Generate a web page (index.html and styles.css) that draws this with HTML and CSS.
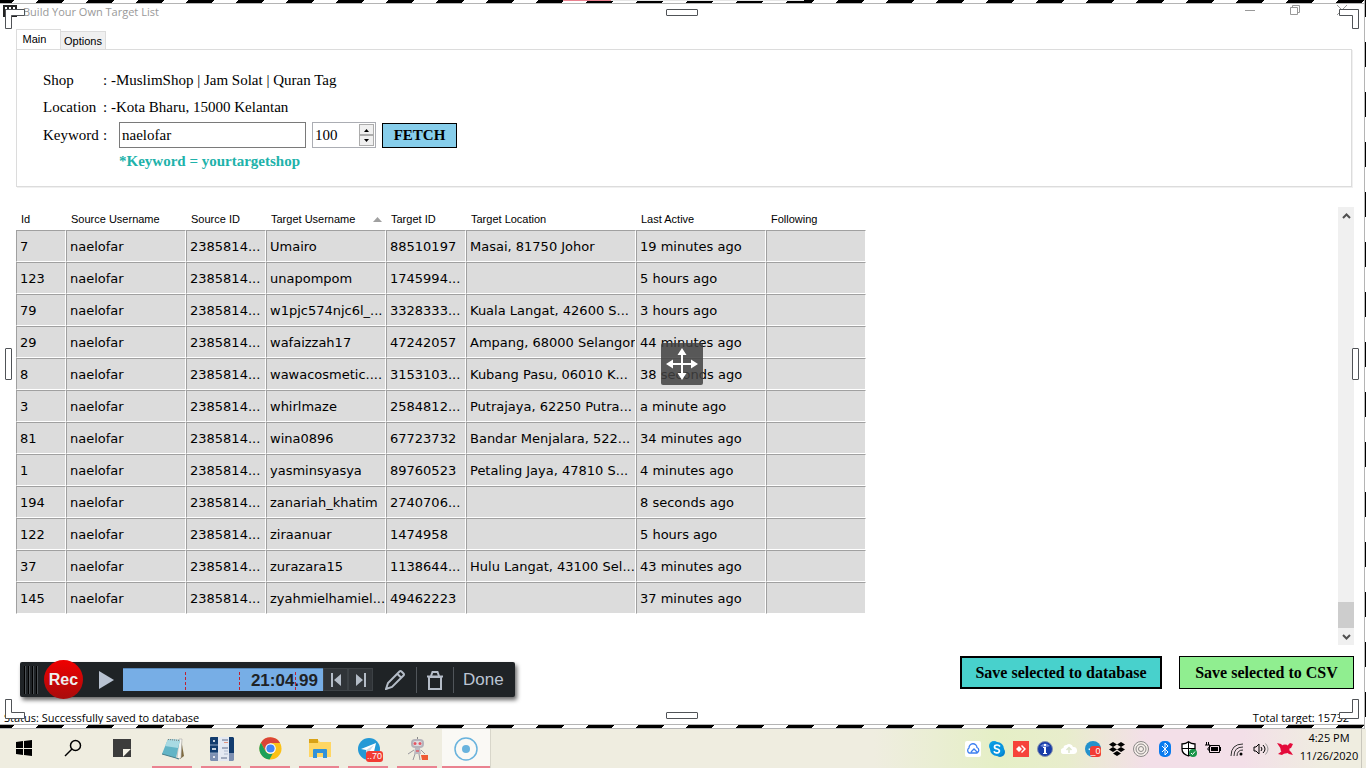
FILE: index.html
```html
<!DOCTYPE html>
<html lang="en">
  <head>
    <meta charset="UTF-8" />
    <meta name="viewport" content="width=device-width, initial-scale=1.0" />
    <title>Build Your Own Target List</title>
    <link rel="stylesheet" href="styles.css">
  </head>

  <body>
    <div class="capture">
      <div class="stripes top"><span class="strip-pink"></span><span class="strip-gray"></span></div>

      <main class="window">
        <header class="titlebar">
          <svg class="app-icon" width="16" height="14" viewBox="0 0 16 14"><path d="M1 1h14v12H1z" fill="#222"/><path d="M3 3h2v2H3zM7 3h2v2H7zM11 3h2v2h-2zM3 7h2v1H3zM7 7h2v1H7zM3 10h2v1H3zM7 10h2v1H7zM11 10h2v1h-2z" fill="#fff"/></svg>
          <h1>Build Your Own Target List</h1>
          <div class="win-buttons">
            <button aria-label="Minimize"><svg width="12" height="12" viewBox="0 0 12 12"><path d="M1 6.500h10"/></svg></button>
            <button aria-label="Restore"><svg width="12" height="12" viewBox="0 0 12 12"><path d="M.5 3.500h7v7h-7zM2.500 3.500v-2h7v7h-2"/></svg></button>
            <button aria-label="Close"><svg width="12" height="12" viewBox="0 0 12 12"><path d="M1 1l10 10M11 1L1 11"/></svg></button>
          </div>
        </header>

        <nav class="tabs">
          <button class="tab active">Main</button>
          <button class="tab">Options</button>
        </nav>

        <section class="panel">
          <p class="info"><span class="name">Shop</span>: -MuslimShop | Jam Solat | Quran Tag</p>
          <p class="info"><span class="name">Location</span>: -Kota Bharu, 15000 Kelantan</p>
          <div class="search">
            <label class="key" for="keyword"><span class="name">Keyword</span>:</label>
            <input type="text" id="keyword" class="keyword" value="naelofar">
            <div class="stepper">
              <input type="text" class="amount" id="amount" value="100" aria-label="Amount">
              <div class="spin">
                <button aria-label="Increase"><svg width="7" height="4" viewBox="0 0 7 4"><path d="M1 4L3.500 1L6 4z"/></svg></button>
                <button aria-label="Decrease"><svg width="7" height="4" viewBox="0 0 7 4"><path d="M1 0L3.500 3L6 0z"/></svg></button>
              </div>
            </div>
            <button class="fetch">FETCH</button>
          </div>
          <p class="hint">*Keyword = yourtargetshop</p>
        </section>

        <section class="list">
          <div class="table-wrap">
            <table>
              <colgroup>
                <col class="w50"><col class="w120"><col class="w80"><col class="w120"><col class="w80"><col class="w170"><col class="w130"><col class="w100">
              </colgroup>
              <thead>
                <tr>
                  <th>Id</th>
                  <th>Source Username</th>
                  <th>Source ID</th>
                  <th class="sorted">Target Username <svg width="9" height="5" viewBox="0 0 9 5"><path d="M0 5L4.500 0L9 5z" fill="#a0a0a0"/></svg></th>
                  <th>Target ID</th>
                  <th>Target Location</th>
                  <th>Last Active</th>
                  <th>Following</th>
                </tr>
              </thead>
              <tbody>
                <tr><td>7</td><td>naelofar</td><td>2385814...</td><td>Umairo</td><td>88510197</td><td>Masai, 81750 Johor</td><td>19 minutes ago</td><td></td></tr>
                <tr><td>123</td><td>naelofar</td><td>2385814...</td><td>unapompom</td><td>1745994...</td><td></td><td>5 hours ago</td><td></td></tr>
                <tr><td>79</td><td>naelofar</td><td>2385814...</td><td>w1pjc574njc6l_...</td><td>3328333...</td><td>Kuala Langat, 42600 S...</td><td>3 hours ago</td><td></td></tr>
                <tr><td>29</td><td>naelofar</td><td>2385814...</td><td>wafaizzah17</td><td>47242057</td><td>Ampang, 68000 Selangor</td><td>44 minutes ago</td><td></td></tr>
                <tr><td>8</td><td>naelofar</td><td>2385814...</td><td>wawacosmetic....</td><td>3153103...</td><td>Kubang Pasu, 06010 K...</td><td>38 seconds ago</td><td></td></tr>
                <tr><td>3</td><td>naelofar</td><td>2385814...</td><td>whirlmaze</td><td>2584812...</td><td>Putrajaya, 62250 Putra...</td><td>a minute ago</td><td></td></tr>
                <tr><td>81</td><td>naelofar</td><td>2385814...</td><td>wina0896</td><td>67723732</td><td>Bandar Menjalara, 522...</td><td>34 minutes ago</td><td></td></tr>
                <tr><td>1</td><td>naelofar</td><td>2385814...</td><td>yasminsyasya</td><td>89760523</td><td>Petaling Jaya, 47810 S...</td><td>4 minutes ago</td><td></td></tr>
                <tr><td>194</td><td>naelofar</td><td>2385814...</td><td>zanariah_khatim</td><td>2740706...</td><td></td><td>8 seconds ago</td><td></td></tr>
                <tr><td>122</td><td>naelofar</td><td>2385814...</td><td>ziraanuar</td><td>1474958</td><td></td><td>5 hours ago</td><td></td></tr>
                <tr><td>37</td><td>naelofar</td><td>2385814...</td><td>zurazara15</td><td>1138644...</td><td>Hulu Langat, 43100 Sel...</td><td>43 minutes ago</td><td></td></tr>
                <tr><td>145</td><td>naelofar</td><td>2385814...</td><td>zyahmielhamiel...</td><td>49462223</td><td></td><td>37 minutes ago</td><td></td></tr>
              </tbody>
            </table>
          </div>
          <div class="scrollbar">
            <button aria-label="Scroll up"><svg width="9" height="6" viewBox="0 0 9 6"><path d="M1 5l3.500-3.500L8 5"/></svg></button>
            <div class="thumb"></div>
            <button aria-label="Scroll down"><svg width="9" height="6" viewBox="0 0 9 6"><path d="M1 1l3.500 3.500L8 1"/></svg></button>
          </div>
        </section>

        <div class="actions">
          <button class="save-db">Save selected to database</button>
          <button class="save-csv">Save selected to CSV</button>
        </div>

        <footer class="status">
          <span>Status: Successfully saved to database</span>
          <span>Total target: 15732</span>
        </footer>
      </main>

      <div class="stripes bottom"></div>
      <div class="stripes-right"></div>

      <!-- capture frame -->
      <svg class="corner tl" viewBox="0 0 20 20"><path d="M.5.5h19v6h-13v13h-6z"/></svg>
      <svg class="corner tr" viewBox="0 0 20 20"><path d="M.5.5h19v19h-6v-13h-13z"/></svg>
      <svg class="corner bl" viewBox="0 0 20 20"><path d="M.5.5h6v13h13v6h-19z"/></svg>
      <svg class="corner br" viewBox="0 0 20 20"><path d="M13.500.5h6v19h-19v-6h13z"/></svg>
      <span class="handle wide t"></span>
      <span class="handle wide b"></span>
      <span class="handle tall l"></span>
      <span class="handle tall r"></span>
      <div class="move">
        <svg width="32" height="32" viewBox="0 0 32 32"><path d="M15 5h2v10h10v2H17v10h-2V17H5v-2h10z"/><path d="M16 0l4.500 7h-9zM16 32l4.500-7h-9zM0 16l7-4.500v9zM32 16l-7-4.500v9z"/></svg>
      </div>

      <div class="recorder">
        <span class="grip"></span>
        <button class="rec">Rec</button>
        <button class="play" aria-label="Play"><svg width="15" height="18" viewBox="0 0 15 18"><path d="M0 0l15 9L0 18z" fill="#b9c3d2"/></svg></button>
        <div class="timeline"><i></i><i></i><i></i><span>21:04.99</span></div>
        <button class="step" aria-label="Previous"><svg width="12" height="14" viewBox="0 0 12 14"><path d="M1 0h2v14H1zM11 1v12L4 7z"/></svg></button>
        <button class="step" aria-label="Next"><svg width="12" height="14" viewBox="0 0 12 14"><path d="M9 0h2v14H9zM1 1v12l7-6z"/></svg></button>
        <button class="tool pencil" aria-label="Edit"><svg width="20" height="20" viewBox="0 0 20 20"><path d="M1 19l2-6L14.500 1.500q1-1 2 0l2 2q1 1 0 2L7 17zM12.500 4l3.500 3.500"/></svg></button>
        <button class="tool trash" aria-label="Delete"><svg width="18" height="20" viewBox="0 0 18 20"><path d="M3 7h12v12H3zM1 6.500h16M5 6l1.500-4h5L13 6"/></svg></button>
        <button class="done">Done</button>
      </div>
    </div>

    <footer class="taskbar">
      <div class="apps">
        <button aria-label="Start"><svg width="16" height="16" viewBox="0 0 16 16"><path d="M0 2l7-1v7H0zM8 1l8-1v8H8zM0 9h7v6l-7-1zM8 9h8v7l-8-1z"/></svg></button>
        <button aria-label="Search"><svg width="18" height="18" viewBox="0 0 18 18"><g fill="none" stroke="#000" stroke-width="1.500"><circle cx="11.500" cy="6.500" r="5"/><path d="M8 10l-7 7"/></g></svg></button>
        <button aria-label="Sticky note"><svg width="18" height="18" viewBox="0 0 18 18"><path d="M0 0h18v10l-8 8H0z" fill="#3c3c3c"/><path d="M10 10h8l-8 8z" fill="#f5f3e8"/><path d="M18 10v8h-8z" fill="#3c3c3c"/></svg></button>
        <button class="open" aria-label="Notepad"><svg width="26" height="24" viewBox="0 0 26 24"><path d="M21 2l3 17-4 3z" fill="#806c42"/><path d="M19 2h3l-1 19-4 1z" fill="#f4f4f0" stroke="#999" stroke-width=".5"/><path d="M8 2l12 1-4 18-14-4z" fill="#62b4c6"/><path d="M8 2l12 1-2 8-13-2z" fill="#a8dae3"/><path d="M2 17l14 4 3 1" stroke="#477e8b" fill="none"/><path d="M8 2.500l12 1" stroke="#777" stroke-dasharray="1 1"/></svg></button>
        <button class="open" aria-label="Database"><svg width="24" height="24" viewBox="0 0 24 24"><path d="M0 1q0-1 1-1h7v16H0zM19 0h4l1 1v15h-5z" fill="#123c6e"/><path d="M0 16h8v8H1l-1-1zM19 16h5v7l-1 1h-4z" fill="#7d90b2"/><path d="M8 0h11v24H8z" fill="#e4e9f2"/><path d="M0 8h8M0 16h8" stroke="#8ba2c0"/><path d="M2 12h4M3 4h2M3 20h2" stroke="#fff" stroke-width="1.500"/><path d="M12 3h6M12 11h6M11 21h6" stroke="#5d6b88"/><path d="M14 5.500h4" stroke="#e29580"/><path d="M14 14h4M14 17h4" stroke="#abb7cd"/></svg></button>
        <button class="open" aria-label="Chrome"><svg width="23" height="23" viewBox="0 0 24 24"><circle cx="12" cy="12" r="11.500" fill="#fbc116"/><path d="M2 6A11.500 11.500 0 0 1 22 6.300H12L7.200 15z" fill="#db4437"/><path d="M2 6l5 9a5.500 5.500 0 0 0 7.500 2L11 23.500A11.500 11.500 0 0 1 2 6z" fill="#1da05b"/><circle cx="12" cy="12" r="5.500" fill="#fff"/><circle cx="12" cy="12" r="4.300" fill="#4285f4"/></svg></button>
        <button class="open" aria-label="Files"><svg width="22" height="20" viewBox="0 0 22 20"><path d="M0 1h9l2 2h11v15H0z" fill="#ffd663"/><path d="M0 0h9v4H0z" fill="#d9a216"/><path d="M4 11q0-1 1-1h12q1 0 1 1v8h-4v-5H8v5H4z" fill="#3292d8"/></svg></button>
        <button class="open badge-host" aria-label="Telegram"><svg width="24" height="24" viewBox="0 0 24 24"><circle cx="12" cy="12" r="11" fill="#2499d6"/><path d="M4 12l15-6-3 13-4-4-2 3-1-5z" fill="#fff"/><path d="M9 13l8-5-5 7-2 3z" fill="#c8dceb"/></svg><span class="badge">..70</span></button>
        <button class="open" aria-label="Bot"><svg width="22" height="24" viewBox="0 0 22 24"><path d="M10.500 0v3" stroke="#888"/><rect x="4" y="2" width="13" height="9" rx="4" fill="#b5b3ba"/><rect x="6" y="4" width="9" height="5" rx="2" fill="#dcdbe0"/><circle cx="8" cy="6.500" r="1.500" fill="#e45661"/><circle cx="13" cy="6.500" r="1.500" fill="#e45661"/><path d="M8 11h5l1 6H7z" fill="#bbb9c0"/><path d="M9 13h3v2H9z" fill="#d7727d"/><path d="M7 13l-6 4M14 13l4 4M8 17l-2 6M12 17l1 6" stroke="#98979c" fill="none"/><path d="M14 18h7v5h-6z" fill="#ef5a33"/></svg></button>
        <button class="open current" aria-label="Recorder"><svg width="24" height="24" viewBox="0 0 24 24"><circle cx="12" cy="12" r="11" fill="none" stroke="#69b3dd" stroke-width="1.500"/><circle cx="12" cy="12" r="4" fill="#69b3dd"/></svg></button>
      </div>

      <div class="tray">
        <button aria-label="Cloud"><svg viewBox="0 0 16 16"><rect width="16" height="16" rx="2" fill="#fff"/><path d="M4 12a3 3 0 0 1 0-5 4 4 0 0 1 8-.5 3 3 0 0 1 0 5.500zM6 11l3-3 4 4" fill="none" stroke="#3c7ff0" stroke-width="1.300"/></svg></button>
        <button aria-label="Skype"><svg viewBox="0 0 16 16"><circle cx="5" cy="5" r="5" fill="#0a9fe4"/><circle cx="11" cy="11" r="5" fill="#0683d0"/><circle cx="8" cy="8" r="7" fill="#0795df"/><path d="M11 5.500Q10 4 8 4C5 4 4.500 7 7.500 7.800S11 9.500 10 11s-4.500 1-5-.8" fill="none" stroke="#fff" stroke-width="1.700"/></svg></button>
        <button aria-label="Remote desktop"><svg viewBox="0 0 16 16"><path d="M0 0h16v16H0z" fill="#f6433a"/><path d="M6 5l3 3-3 3-3-3zM8 5l1-1 4 4-4 4-1-1 3-3z" fill="#fff"/></svg></button>
        <button aria-label="Information"><svg viewBox="0 0 16 16"><circle cx="8" cy="8" r="7.500" fill="#183da8" stroke="#8892ae"/><path d="M3 5q5-5 10 0-5 2-10 0" fill="#6d88d5"/><path d="M7 3h2v2H7zM6 6h3v6h1v1H6v-1h1V7H6z" fill="#fff"/></svg></button>
        <button aria-label="Upload"><svg viewBox="0 0 16 16"><path d="M3 13a3 3 0 0 1-.5-6 3 3 0 0 1 3-3 4 4 0 0 1 6.500 2 3.500 3.500 0 0 1 1 7z" fill="#fff"/><path d="M8 12V7M5.500 9L8 6.500 10.500 9" stroke="#dce5ca" stroke-width="1.500" fill="none"/></svg></button>
        <button class="badge-host" aria-label="Telegram notifications"><svg viewBox="0 0 16 16"><circle cx="8" cy="8" r="8" fill="#2492cc"/><path d="M3 8l6-2-3 4z" fill="#fff"/></svg><span class="badge small">_0</span></button>
        <button aria-label="Dropbox"><svg viewBox="0 0 16 16"><path d="M4 1l4 2.500L4 6 0 3.500zM12 1l4 2.500L12 6 8 3.500zM4 6l4 2.500L4 11 0 8.500zM12 6l4 2.500-4 2.500-4-2.500zM8 10l4 2.500L8 15l-4-2.500z"/></svg></button>
        <button aria-label="Disc"><svg viewBox="0 0 16 16"><g fill="#f5eee9" stroke="#8b8888"><circle cx="8" cy="8" r="7.500"/><circle cx="8" cy="8" r="5"/><circle cx="8" cy="8" r="2.500"/></g></svg></button>
        <button aria-label="Bluetooth"><svg viewBox="0 0 16 16"><rect x="2" width="12" height="16" rx="5" fill="#087bef"/><path d="M5 5l6 6-3 3V2l3 3-6 6" fill="none" stroke="#fff"/></svg></button>
        <button aria-label="Security"><svg viewBox="0 0 16 16"><path d="M7.500.8Q10 3 14 3v5q0 5-6.500 7Q1 13 1 8V3q4 0 6.500-2.200z" fill="#fff" stroke="#000" stroke-width="1.300"/><path d="M7.500 1v14M1 7.500h13" stroke="#000"/><circle cx="12" cy="12" r="4" fill="#179447"/><path d="M10 12l1.500 1.500L14 10.500" fill="none" stroke="#fff"/></svg></button>
        <button aria-label="Battery"><svg viewBox="0 0 16 16"><path d="M4.500 4.500h10v7h-10z" fill="none" stroke="#000"/><path d="M6 6h7v4H6zM15 6h1v4h-1z"/><path d="M1.500 1v3M3.500 1v3M0 4h5v2L3 7v2h2" fill="none" stroke="#000"/></svg></button>
        <button aria-label="Network"><svg viewBox="0 0 16 16"><g fill="none" stroke="#333"><path d="M2 15Q2 3 14 3M5 15Q5 6 14 6M8 15Q8 9 14 9"/></g><circle cx="12" cy="13" r="1.500"/></svg></button>
        <button aria-label="Volume"><svg viewBox="0 0 16 16"><g fill="none" stroke="#000"><path d="M1 6h2l3-3v10l-3-3H1zM8 6q2 2 0 4M10 4q4 4 0 8"/><path d="M12.500 2.500q5 5.500 0 11" stroke="#999"/></g></svg></button>
        <button aria-label="Antivirus"><svg viewBox="0 0 16 16"><circle cx="8" cy="8" r="4.500" fill="#e40b3b"/><path d="M0 2l4 1 3 3-3 2zM11 4l2-2 3 1-2 4-3 1zM12 9l2 2 2 3-4-1-3-2zM5 10l3 2-3 2-4-1z" fill="#e40b3b"/></svg></button>
        <time class="clock" datetime="2020-11-26T16:25">4:25 PM<br>11/26/2020</time>
      </div>
    </footer>
  </body>
</html>
```

FILE: styles.css
```css
* {
  box-sizing: border-box;
}

body {
  margin: 0;
  height: 100vh;
  display: flex;
  flex-direction: column;
  overflow: hidden;
  background-color: white;
  color: black;
  font-family: "Open Sans", sans-serif;
  font-size: 12px;
}

h1,
p {
  margin: 0;
}

button {
  padding: 0;
  border: none;
  background: none;
  color: inherit;
  font: inherit;
}

svg {
  display: block;
  flex: none;
}

.capture {
  flex: 1;
  min-height: 0;
  position: relative;
  display: flex;
  flex-direction: column;
}

/* striped frame */
.stripes {
  flex: none;
  height: 4px;
  background: linear-gradient(135deg, white 9px, black 9px, black 27px, white 27px) 26px 0 / 50px 3px repeat-x;
}

.stripes.top {
  display: flex;
  border-bottom: 1px solid #b4b4b4;
}

.strip-pink {
  width: 48px;
  height: 1px;
  margin-left: 563px;
  background-color: #ea8290;
}

.strip-gray {
  width: 193px;
  height: 1px;
  background-color: #e6e6e6;
}

.stripes.bottom {
  height: 5px;
  border-top: 1px solid #b4b4b4;
  border-bottom: 1px solid #b4b4b4;
}

.stripes-right {
  position: absolute;
  top: 0;
  right: 0;
  bottom: 0;
  width: 2px;
  border-left: 1px solid #b4b4b4;
  background: linear-gradient(black 25px, white 25px) 0 -8px / 1px 50px repeat-y;
}

/* main window */
.window {
  flex: 1;
  min-height: 0;
  display: flex;
  flex-direction: column;
}

.titlebar {
  height: 25px;
  display: flex;
  align-items: flex-start;
  padding-left: 2px;
}

.titlebar h1 {
  flex: 1;
  margin-left: 5px;
  font-size: 11px;
  line-height: 16px;
  font-weight: normal;
  color: #999;
}

.win-buttons {
  display: flex;
  gap: 34px;
  padding-right: 18px;
}

.win-buttons svg {
  fill: none;
  stroke: #999;
}

.tabs {
  display: flex;
  align-items: flex-end;
  height: 21px;
  margin: 0 14px -1px 16px;
}

.tab {
  width: 45px;
  height: 19px;
  border: 1px solid #dcdcdc;
  border-left: none;
  background-color: #f0f0f0;
  font-family: "Liberation Sans", sans-serif;
  font-size: 11px;
}

.tab.active {
  height: 21px;
  padding: 0 8px 2px 0;
  border-left: 1px solid #dcdcdc;
  border-bottom: none;
  background-color: white;
}

.panel {
  height: 138px;
  margin: 0 14px 0 16px;
  padding: 17px 26px;
  border: 1px solid #dcdcdc;
  box-shadow: 1px 1px #f0f0f0;
  font-family: "Liberation Serif", serif;
  font-size: 15px;
}

.info {
  height: 27px;
  line-height: 26px;
}

.name {
  display: inline-block;
  width: 60px;
}

.search {
  display: flex;
  align-items: center;
  margin-top: 1px;
}

.key {
  width: 76px;
}

.keyword {
  width: 187px;
  height: 26px;
  padding: 1px 2px;
  border: 1px solid #7a7a7a;
  font: inherit;
}

.stepper {
  display: flex;
  width: 64px;
  height: 26px;
  margin: 0 6px;
  padding: 1px;
  border: 1px solid #abadb3;
}

.amount {
  flex: 1;
  min-width: 0;
  padding: 0 1px;
  border: none;
  font: inherit;
}

.spin {
  width: 15px;
  display: flex;
  flex-direction: column;
}

.spin button {
  flex: 1;
  display: flex;
  align-items: center;
  justify-content: center;
  border: 1px solid #acacac;
  background-color: #f0f0f0;
}

.fetch {
  width: 75px;
  height: 25px;
  border: 1px solid black;
  background-color: skyblue;
  font-weight: bold;
}

.hint {
  padding-left: 76px;
  line-height: 26px;
  font-weight: bold;
  color: lightseagreen;
}

/* target list */
.list {
  flex: 1;
  min-height: 0;
  display: flex;
  justify-content: space-between;
  margin: 20px 12px 0 16px;
}

.table-wrap {
  overflow: hidden;
}

table {
  width: 850px;
  table-layout: fixed;
  border-collapse: separate;
  border-spacing: 0;
}

.w50 { width: 50px; }
.w80 { width: 80px; }
.w100 { width: 100px; }
.w120 { width: 120px; }
.w130 { width: 130px; }
.w170 { width: 170px; }

th {
  height: 23px;
  padding: 0 5px;
  font-family: "Liberation Sans", sans-serif;
  font-size: 11px;
  font-weight: normal;
  text-align: left;
  white-space: nowrap;
}

.sorted svg {
  display: inline-block;
  float: right;
  margin-top: 4px;
  margin-right: -1px;
}

td {
  height: 32px;
  padding: 0 0 0 3px;
  border: 1px solid #a0a0a0;
  border-right-color: white;
  border-bottom-color: white;
  background-color: gainsboro;
  font-family: "DejaVu Sans", sans-serif;
  font-size: 13px;
  white-space: nowrap;
  overflow: hidden;
}

.scrollbar {
  width: 16px;
  display: flex;
  flex-direction: column;
  background-color: #f0f0f0;
}

.scrollbar button {
  height: 17px;
  display: flex;
  align-items: center;
  justify-content: center;
}

.scrollbar svg {
  fill: none;
  stroke: #505050;
  stroke-width: 2;
}

.thumb {
  height: 26px;
  margin-top: auto;
  background-color: #cdcdcd;
}

.actions {
  display: flex;
  justify-content: flex-end;
  gap: 17px;
  padding: 11px 12px 20px;
  font-family: "Liberation Serif", serif;
  font-size: 16px;
  font-weight: bold;
}

.actions button {
  height: 33px;
  border: 1px solid black;
}

.actions .save-db {
  width: 202px;
  border-width: 2px;
  background-color: mediumturquoise;
}

.actions .save-csv {
  width: 175px;
  background-color: lightgreen;
}

.status {
  display: flex;
  justify-content: space-between;
  height: 15px;
  padding: 0 17px 0 4px;
  font-size: 11px;
  line-height: 18px;
}

/* capture handles */
.corner {
  position: absolute;
  width: 20px;
  height: 20px;
  fill: white;
  stroke: #505357;
}

.tl { top: 9px; left: 5px; }
.tr { top: 9px; right: 7px; }
.bl { bottom: 10px; left: 5px; }
.br { bottom: 10px; right: 7px; }

.handle {
  position: absolute;
  border: 1px solid #505357;
  border-radius: 1px;
  background-color: white;
}

.wide {
  left: calc(50% - 17px);
  width: 32px;
  height: 7px;
}

.tall {
  top: calc(50% - 17px);
  width: 7px;
  height: 32px;
}

.t { top: 9px; }
.b { bottom: 10px; }
.l { left: 5px; }
.r { right: 7px; }

.move {
  position: absolute;
  top: calc(50% - 22px);
  left: calc(50% - 22px);
  width: 42px;
  height: 42px;
  display: flex;
  align-items: center;
  justify-content: center;
  border-radius: 2px;
  background-color: rgba(65, 65, 65, 0.85);
}

.move svg {
  fill: white;
}

/* recording toolbar */
.recorder {
  position: absolute;
  left: 20px;
  bottom: 32px;
  width: 495px;
  height: 35px;
  display: flex;
  align-items: center;
  border-radius: 2px;
  background-color: #1f2326;
  box-shadow: 2px 3px 4px rgba(0, 0, 0, 0.6);
  color: #bcc5d4;
  font-family: "Liberation Sans", sans-serif;
  font-size: 17px;
}

.grip {
  width: 16px;
  height: 28px;
  margin: 0 4px;
  background: repeating-linear-gradient(90deg, black 0 1px, #4b5054 1px 2px, #1f2326 2px 4px);
}

.rec {
  flex: none;
  width: 39px;
  height: 39px;
  border-radius: 50%;
  background: linear-gradient(#f00000, #a80c0c);
  color: #eee;
  font-size: 16px;
  font-weight: bold;
}

.play {
  margin: 0 9px 0 16px;
}

.timeline {
  width: 200px;
  height: 23px;
  display: flex;
  justify-content: flex-end;
  position: relative;
  border-top: 1px solid #5586b7;
  background-color: #77aee6;
  color: #1f2326;
}

.timeline span {
  margin-right: 5px;
  line-height: 23px;
  font-weight: bold;
}

.timeline i {
  position: absolute;
  top: 3px;
  left: 31%;
  height: 18px;
  border-left: 1px dashed #c02030;
}

.timeline i:nth-child(2) { left: 58%; }
.timeline i:nth-child(3) { left: 86%; }

.step {
  width: 25px;
  height: 23px;
  display: flex;
  align-items: center;
  justify-content: center;
  border: 1px solid #3c4145;
  background-color: #303438;
}

.step svg {
  fill: #b4bcc7;
}

.tool {
  height: 26px;
  padding: 0 11px 0 12px;
  border-right: 1px solid #50555a;
}

.tool.trash {
  padding: 0 9px;
}

.tool svg {
  fill: none;
  stroke: #b4bcc7;
  stroke-width: 2;
}

.done {
  margin-left: 9px;
}

/* taskbar */
.taskbar {
  flex: none;
  height: 39px;
  display: flex;
  justify-content: space-between;
  background: linear-gradient(90deg, #efede0 64%, #e5efc6 73%, #e8edcc 78%, #f3dfe8 84%, #f3dfe8 91%, #efede0 97%);
}

.apps {
  display: flex;
}

.apps button {
  width: 49px;
  display: flex;
  flex-direction: column;
  align-items: center;
  justify-content: center;
  position: relative;
}

.apps button:not(.open) {
  padding: 0 1px 2px 0;
}

.apps .open {
  left: 1px;
}

.apps .open::after {
  content: "";
  position: absolute;
  left: 4px;
  right: 5px;
  bottom: 0;
  height: 2px;
  background-color: #ea8290;
}

.apps .current {
  background-color: #faf9f5;
  border-right: 1px solid #d8d6ca;
}

.apps .current::after {
  left: 0;
  right: 0;
}

.badge {
  position: absolute;
  left: 22px;
  top: 22px;
  width: 17px;
  height: 11px;
  border-radius: 3px;
  background-color: #f23c34;
  color: white;
  font-family: "Liberation Sans", sans-serif;
  font-size: 9px;
  line-height: 11px;
  text-align: center;
}

.badge.small {
  left: 9px;
  top: 17px;
  width: 11px;
}

.tray {
  display: flex;
  margin-right: 4px;
  border-right: 1px solid #c9c7bd;
}

.tray button {
  width: 24px;
  display: flex;
  align-items: center;
  justify-content: center;
  position: relative;
}

.tray button svg {
  width: 16px;
  height: 16px;
}

.clock {
  width: 64px;
  font-size: 11px;
  line-height: 18px;
  text-align: center;
}
```
